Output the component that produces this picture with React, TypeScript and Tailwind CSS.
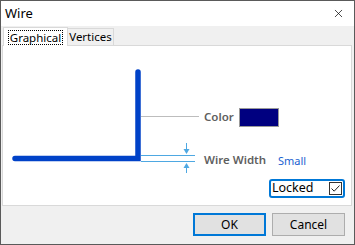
import { X } from 'lucide-react'

const ui = { fontFamily: '"Noto Sans", "Open Sans", Arial, sans-serif' }

function Tabs() {
  return (
    <div className="flex h-[19px] items-end bg-[#f0f0f0] pl-[2px]">
      <div className="relative z-10 -mb-px flex h-[19px] w-[65px] items-center justify-center border border-b-0 border-[#d9d9d9] bg-white">
        <span className="border border-dotted border-black px-[1px] text-[11.5px] leading-[13px] text-black">Graphical</span>
      </div>
      <div className="flex h-[17px] w-[46px] items-center justify-center border border-b-0 border-l-0 border-[#d9d9d9] text-[11.5px] text-black">
        Vertices
      </div>
    </div>
  )
}

function Drawing() {
  return (
    <svg className="absolute left-0 top-0" width="350" height="160">
      {/* wire */}
      <path d="M12 112.5 H135 V26" fill="none" stroke="#0042c8" strokeWidth="5.5" strokeLinecap="round" strokeLinejoin="miter" />
      {/* leader to color */}
      <line x1="138" y1="70.5" x2="196" y2="70.5" stroke="#bdbdbd" strokeWidth="1" />
      {/* width markers */}
      <line x1="138" y1="109.5" x2="192" y2="109.5" stroke="#4ea8e2" strokeWidth="1" />
      <line x1="138" y1="115.5" x2="192" y2="115.5" stroke="#4ea8e2" strokeWidth="1" />
      <line x1="183.5" y1="97" x2="183.5" y2="107" stroke="#4ea8e2" strokeWidth="1" />
      <path d="M180.5 103 L183.5 108 L186.5 103 Z" fill="#4ea8e2" />
      <line x1="183.5" y1="118" x2="183.5" y2="127" stroke="#4ea8e2" strokeWidth="1" />
      <path d="M180.5 122 L183.5 117 L186.5 122 Z" fill="#4ea8e2" />
    </svg>
  )
}

export default function App() {
  return (
    <div className="flex h-[245px] w-[355px] flex-col border border-[#5a5a5a] bg-[#f0f0f0]" style={ui}>
      <div className="flex h-[25px] items-center justify-between bg-white pl-[4px] pr-[9px]">
        <span className="text-[13px] text-black">Wire</span>
        <X className="h-[13px] w-[13px] text-black" strokeWidth={1.3} />
      </div>
      <Tabs />
      <div className="relative ml-[1px] mr-[2px] h-[161px] border border-[#d9d9d9] bg-white">
        <Drawing />
        <span className="absolute left-[201px] top-[62px] text-[11.5px] font-semibold text-[#5f5f5f]">Color</span>
        <div className="absolute left-[236px] top-[62px] h-[19px] w-[40px] border border-[#9a9a9a] bg-[#000080]" />
        <span className="absolute left-[201px] top-[105px] text-[11.5px] font-semibold text-[#5f5f5f]">Wire Width</span>
        <span className="absolute left-[275px] top-[107px] text-[11px] text-[#1a5fd0]">Small</span>
        <div className="absolute left-[266px] top-[133px] flex h-[19px] w-[76px] items-center justify-between rounded-[3px] border-2 border-[#0078d7] bg-white pl-[1px] pr-[1px]">
          <span className="text-[12.5px] leading-none text-black">Locked</span>
          <div className="flex h-[13px] w-[13px] items-center justify-center border border-[#333]">
            <svg width="11" height="11" viewBox="0 0 11 11">
              <path d="M1.5 5.5 L4.2 8.2 L9.5 2.5" fill="none" stroke="#222" strokeWidth="1" />
            </svg>
          </div>
        </div>
      </div>
      <div className="flex flex-1 items-start justify-end gap-[6px] pr-[9px] pt-[7px]">
        <button className="h-[23px] w-[73px] border-2 border-[#0078d7] bg-[#e1e1e1] text-[12px] text-black">OK</button>
        <button className="h-[23px] w-[73px] border border-[#adadad] bg-[#e1e1e1] text-[12px] text-black">Cancel</button>
      </div>
    </div>
  )
}
